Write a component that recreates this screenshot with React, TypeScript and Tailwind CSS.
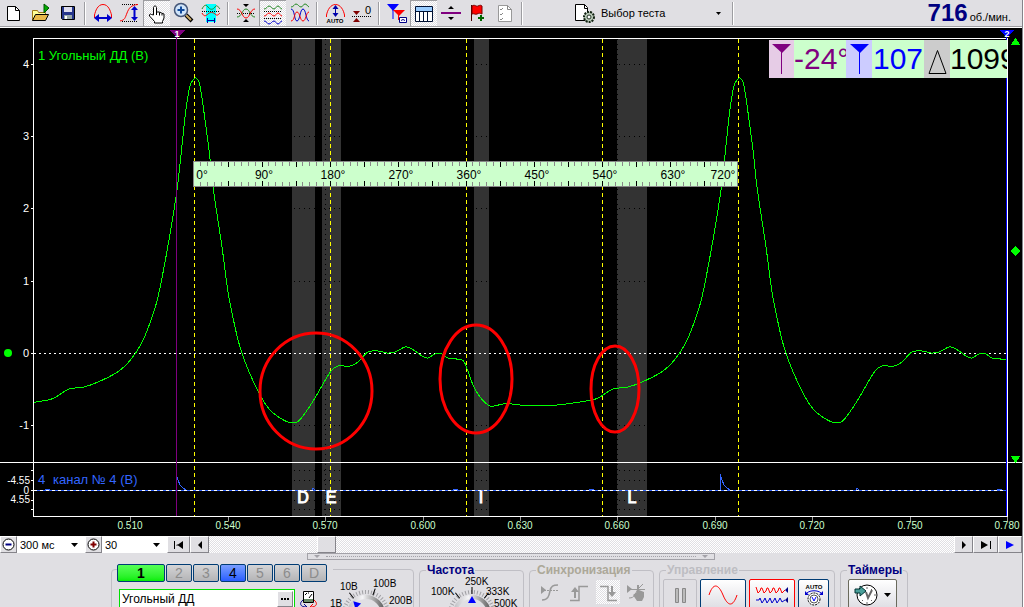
import React from "react";

type Point = [number, number];

// One engine cycle of the knock sensor trace, starting at the compression peak.
const PERIOD = 544;
const CYCLE: Point[] = [
  [196, 78], [199, 82], [202, 98], [209, 150], [213, 187], [222, 247],
  [228, 292], [235, 327], [240, 347], [247, 367], [260, 395], [270, 410],
  [280, 418], [288, 422], [297, 422], [303, 416], [315, 398], [327, 377],
  [332, 370], [338, 366], [350, 366], [358, 362], [368, 352], [378, 351],
  [387, 353], [395, 352], [405, 347], [412, 349], [422, 356], [428, 358],
  [435, 354], [442, 354], [448, 358], [462, 360], [466, 366], [473, 385],
  [480, 397], [490, 406], [503, 404], [512, 404], [520, 405], [535, 406],
  [557, 405], [573, 403], [592, 400], [600, 397], [613, 389], [628, 387],
  [642, 382], [660, 373], [670, 365], [679, 354], [685, 344], [691, 331],
  [701, 301], [709, 262], [715, 228], [721, 190], [725, 155], [728, 126],
  [731, 102], [734, 86], [737, 80],
];

const PULSE: Point[] = [
  [176, 490], [176, 474], [178, 480], [180, 485], [183, 488], [186, 490],
  [312, 490], [313, 488], [315, 490], [453, 490], [454, 489], [458, 490],
  [589, 490], [590, 489], [594, 490],
];

const repeat = (points: Point[]): Point[] =>
  [-PERIOD, 0, PERIOD].flatMap((dx) =>
    points.map(([x, y]): Point => [x + dx, y])
  );

const toLine = (points: Point[]) => points.map((p) => p.join(",")).join(" ");

// Catmull-Rom spline written as cubic segments
const toCurve = (p: Point[]) =>
  p.slice(1, -2).reduce((d, _, i) => {
    const [a, b, c, e] = [p[i], p[i + 1], p[i + 2], p[i + 3]];
    return `${d}C${b[0] + (c[0] - a[0]) / 6} ${b[1] + (c[1] - a[1]) / 6} ${
      c[0] - (e[0] - b[0]) / 6
    } ${c[1] - (e[1] - b[1]) / 6} ${c[0]} ${c[1]}`;
  }, `M${p[1][0]} ${p[1][1]}`);

const BANDS = [
  { x: 292, w: 23, label: "D", tx: 303 },
  { x: 322, w: 19, label: "E", tx: 331 },
  { x: 474, w: 15, label: "I", tx: 481 },
  { x: 617, w: 30, label: "L", tx: 632 },
];
const Y_AXIS: [string, number][] = [
  ["4", 64], ["3", 136], ["2", 208], ["1", 281], ["0", 353], ["-1", 425],
];
const X_AXIS: [string, number][] = [
  ["0.510", 130], ["0.540", 228], ["0.570", 325], ["0.600", 423],
  ["0.630", 520], ["0.660", 617], ["0.690", 715], ["0.720", 812],
  ["0.750", 910], ["0.780", 1007],
];
const RULER: [string, number][] = [
  ["0°", 202], ["90°", 264], ["180°", 333], ["270°", 401], ["360°", 469],
  ["450°", 537], ["540°", 605], ["630°", 673], ["720°", 723],
];

const Chart = () => (
  <svg
    viewBox="0 28 1022 508"
    className="block w-full h-auto bg-black"
    role="img"
    aria-label="Осциллограмма"
  >
    <defs>
      <clipPath id="plot">
        <rect x="34" y="39" width="973" height="477" />
      </clipPath>
    </defs>

    <g shapeRendering="crispEdges">
      {BANDS.map((b) => (
        <g key={b.label}>
          <rect x={b.x} y="39" width={b.w} height="477" fill="#333" />
          {[64, 136, 208, 281, 425, 470, 480, 500, 509].map((y) => (
            <path
              key={y}
              d={`M${b.x + 2} ${y + 0.5}h${b.w - 2}`}
              stroke="#000"
              strokeDasharray="1 4"
            />
          ))}
        </g>
      ))}
      <path d="M325.5 39V516M617.5 39V516" stroke="#000" strokeDasharray="1 4" />
      <path d="M34 353.5H1007" stroke="#fff" strokeDasharray="2 3" />
      <path
        d="M194.5 39V516M330.5 39V516M466.5 39V516M602.5 39V516M738.5 39V516"
        stroke="#ff0"
        strokeDasharray="4 3"
      />
      <g clipPath="url(#plot)" fill="none">
        <path d={toCurve(repeat(CYCLE))} stroke="#0f0" />
        <polyline points={toLine(repeat(PULSE))} stroke="#36f" />
        <path d="M34 490.5H1007" stroke="#36f" />
        <path d="M34 490.5H1007" stroke="#fff" strokeDasharray="3 3" />
      </g>
      <path d="M33.5 516.5V38.5H1007.5V516.5ZM0 462.5H1022" stroke="#fff" fill="none" />
      <path
        d="M31 64.5h3M31 136.5h3M31 208.5h3M31 281.5h3M31 353.5h3M31 425.5h3M31 470.5h3M31 480.5h3M31 490.5h3M31 500.5h3M31 509.5h3"
        stroke="#fff"
      />
      {X_AXIS.map(([t, x]) => (
        <path key={t} d={`M${x + 0.5} 517v4`} stroke="#999" />
      ))}

      <path d="M176.5 37V516" stroke="#800080" />
      <path d="M169 30h16l-8 8z" fill="#800080" />
      <path d="M1006.5 37V516" stroke="#00f" />
      <path d="M999 30h15l-7 8z" fill="#00f" />
      <path
        d="M1015.5 38l5 7h-10zM1015.5 463l5-7h-10zM1015.5 246l5 5-5 5-5-5z"
        fill="#0f0"
      />

      <rect x="193.5" y="161.5" width="544" height="25" fill="#cfc" stroke="#888" />
      {Array.from({ length: 79 }, (_, i) => i + 1).map((i) => {
        const x = Math.floor(194 + i * 6.8) + 0.5;
        return (
          <path
            key={i}
            d={i % 5 ? `M${x} 162v4M${x} 186v-4` : `M${x} 162v5M${x} 186v-5`}
            stroke={i % 5 ? "#888" : "#000"}
          />
        );
      })}
    </g>
    <circle cx="8" cy="353" r="4" fill="#0f0" />

    <g fontSize="12" textAnchor="middle">
      {RULER.map(([t, x]) => (
        <text key={t} x={x} y="179">{t}</text>
      ))}
    </g>
    <g fontSize="11" fill="#fff" textAnchor="end">
      {Y_AXIS.map(([t, y]) => (
        <text key={t} x="29" y={y + 4}>{t}</text>
      ))}
    </g>
    <g fontSize="10" fill="#fff" textAnchor="end">
      <text x="30" y="484">-4.55</text>
      <text x="29" y="494">0</text>
      <text x="30" y="503">4.55</text>
    </g>
    <g fontSize="10" fill="#cfc" textAnchor="middle">
      {X_AXIS.map(([t, x]) => (
        <text key={t} x={x} y="529">{t}</text>
      ))}
    </g>
    <g fontSize="9" fill="#fff" fontWeight="bold" textAnchor="middle">
      <text x="177" y="37">1</text>
      <text x="1007" y="37">2</text>
    </g>
    <g fontSize="16" fill="#fff" stroke="#fff" strokeWidth="1" textAnchor="middle">
      {BANDS.map((b) => (
        <text key={b.label} x={b.tx} y="503">{b.label}</text>
      ))}
    </g>
    <text x="38" y="60" fontSize="13" fill="#0f0">1 Угольный ДД (В)</text>
    <text x="38" y="484" fontSize="13" fill="#36f">
      4<tspan x="53">канал № 4 (В)</tspan>
    </text>

    <g fill="none" stroke="#f00" strokeWidth="3">
      <ellipse cx="316" cy="391" rx="56" ry="58" />
      <ellipse cx="476" cy="379" rx="36" ry="54" />
      <ellipse cx="615" cy="389" rx="24" ry="43" />
    </g>
  </svg>
);

const Readout = () => (
  <div className="absolute top-[12px] right-[15px] w-[238px] h-[38px] flex overflow-hidden bg-[#ccffcc] text-[30px] leading-[38px] whitespace-nowrap">
    <svg className="w-[25px] shrink-0 bg-[#e6cce6]" viewBox="0 0 25 38">
      <path d="M3 4h19l-9 9z" fill="#800080" />
      <path d="M12.5 10v24" stroke="#800080" />
    </svg>
    <span className="w-[52px] shrink-0 overflow-hidden text-[#800080]">-24°</span>
    <svg className="w-[26px] shrink-0 bg-[#ccccff]" viewBox="0 0 26 38">
      <path d="M4 4h19l-9 9z" fill="#00f" />
      <path d="M13.5 10v24" stroke="#00f" />
    </svg>
    <span className="w-[52px] shrink-0 pl-px overflow-hidden text-[#0000ff]">107</span>
    <svg className="w-[26px] shrink-0 bg-[#cccccc]" viewBox="0 0 26 38">
      <path d="M13.5 10.5l8.5 23h-17z" fill="none" stroke="#000" />
    </svg>
    <span className="overflow-hidden text-black">1099</span>
  </div>
);

const Icon = ({ children }: { children: React.ReactNode }) => (
  <svg width="24" height="24" viewBox="0 0 24 24" fill="none" aria-hidden="true">
    {children}
  </svg>
);

const Tool = ({
  label,
  pressed,
  children,
}: {
  label: string;
  pressed?: boolean;
  children: React.ReactNode;
}) => (
  <button
    title={label}
    aria-label={label}
    aria-pressed={pressed}
    className={
      pressed
        ? "w-[27px] h-[26px] shrink-0 flex items-center justify-center border-t border-l border-[#9d9da1] [background-image:repeating-conic-gradient(#fff_0_25%,#e0dfe3_0_50%)] bg-size-[2px_2px]"
        : "w-[27px] h-[26px] shrink-0 flex items-center justify-center"
    }
  >
    <Icon>{children}</Icon>
  </button>
);

const Divider = () => (
  <div className="w-2 shrink-0 flex justify-center">
    <div className="w-[2px] h-[23px] mt-[2px] border-l border-[#9d9da1] border-r border-r-white" />
  </div>
);

const Toolbar = () => (
  <div className="flex h-7 bg-[#e0dfe3] border-b border-white shadow-[inset_0_-1px_#9d9da1]">
    <Tool label="Новый">
      <path d="M5.5 5.5h8l4 4v10h-12z" fill="#fff" stroke="#000" />
      <path d="M13.5 5.5v4h4" stroke="#000" />
    </Tool>
    <Tool label="Открыть">
      <path d="M3.5 19.5v-10h5l1 2h7v3" fill="#ff9" stroke="#a07818" />
      <path d="M3.5 19.5l3-6h13l-3 6z" fill="#e8b84a" stroke="#000" />
      <path d="M15 3l5 4-5 5z" fill="#0a0" stroke="#050" />
    </Tool>
    <Tool label="Сохранить">
      <path d="M5.5 5.5h13v13h-12l-1-1z" fill="#26368c" stroke="#000" />
      <path d="M8 6h8v5H8z" fill="#dde" />
      <path d="M8 14h8v4H8z" fill="#9aa" />
      <path d="M9 15h2v3H9z" fill="#fff" />
    </Tool>
    <Divider />
    <Tool label="Период">
      <path d="M3.5 17v-3c1-4 3-10.500 8.500-10.500S19.500 10 20.500 14v3" stroke="#f00" />
      <path d="M3 17l5-4v8zM21 17l-5-4v8z" fill="#00c" />
      <path d="M6 17h12" stroke="#00c" strokeWidth="2" />
    </Tool>
    <Tool label="Амплитуда">
      <path d="M4 3.5h16M4 20.5h16" stroke="#000" strokeDasharray="1 1" />
      <path d="M2 20c5-1 5-3 7-8s4-8 11-8.500" stroke="#f00" />
      <path d="M16.500 5l-3.500 4h7zM16.500 20l-3.500-4h7z" fill="#00c" />
      <path d="M16.500 7v10" stroke="#00c" strokeWidth="2" />
    </Tool>
    <Tool label="Рука" pressed>
      <path
        d="M8.500 13V5.500c0-2 3-2 3 0V10l2.500 0 2.500 1 2.500 1v4l-1.500 3.500V21h-8v-1.500L4.500 14c-.5-2 1-2.500 2-1.500z"
        fill="#fff"
        stroke="#000"
      />
      <path d="M11.500 10v3M14.500 10.500v3M17 11.500v2" stroke="#000" />
    </Tool>
    <Tool label="Увеличить">
      <path d="M14 14l6 6" stroke="#000" strokeWidth="4" />
      <path d="M14 14l5 5" stroke="#ca6" strokeWidth="2" />
      <circle cx="9" cy="9" r="6.500" fill="#cfe4fa" stroke="#457" strokeWidth="1.500" />
      <path d="M5.500 9h7M9 5.500v7" stroke="#114a9c" strokeWidth="2" />
    </Tool>
    <Tool label="Фаза">
      <path d="M7 3h10v18H7z" fill="#0ff" />
      <path d="M3 8c2-4 4-5 6-2s5 3 7 0 3 0 5 2" stroke="#282" />
      <path d="M3 10.500h18" stroke="#000" strokeDasharray="1 1" />
      <path d="M3 12c2 4 4 3 6 1s5-2 7 0 3 1 5-1" stroke="#f00" />
      <path d="M8 19.500h8M8.500 17v5M15.500 17v5" stroke="#00a" />
    </Tool>
    <Divider />
    <Tool label="Сжать">
      <path d="M9 3h6l-3 3zM9 21h6l-3-3z" fill="#000" />
      <path d="M3 12.500h18" stroke="#000" strokeDasharray="1 1" />
      <path d="M3 16c5 0 5-8 9-8s4 8 9 8" stroke="#282" />
      <path d="M3 8c5 0 5 9 9 9s4-9 9-9" stroke="#f00" />
    </Tool>
    <Tool label="Раздельно" pressed>
      <path d="M3 7c3 0 3-3 5-3s3 3 5 3 2-3 4-3 2 3 4 3" stroke="#282" />
      <path d="M3 9.500h18M3 16.500h18" stroke="#000" strokeDasharray="1 1" />
      <path d="M3 14c3 0 3-3 5-3s3 3 5 3 2-3 4-3 2 3 4 3" stroke="#f00" />
      <path d="M3 19c3 0 3 3 5 3s3-3 5-3 2 3 4 3 2-3 4-3" stroke="#00c" />
    </Tool>
    <Tool label="Совместно">
      <path d="M3 6c3 0 3-3 5-3s3 3 5 3 2-3 4-3 2 2 4 3" stroke="#282" />
      <path d="M3 8c4 0 3 12 6 12s3-12 6-12 3 12 6 12" stroke="#00c" />
      <path d="M3 20c4 0 3-9 6-9s3 9 6 9 3-9 6-9" stroke="#f00" />
    </Tool>
    <Divider />
    <Tool label="Авто масштаб">
      <path d="M3.500 16v-2c1-5 4-10.500 9-10.500S20.500 9 21.500 14v2" stroke="#f00" />
      <path d="M12.500 4l-3 4h6zM12.500 16l-3-4h6z" fill="#00a" />
      <path d="M12.500 6v8" stroke="#00a" />
      <text x="12" y="22" fontSize="6" fontWeight="bold" fill="#000" textAnchor="middle">AUTO</text>
    </Tool>
    <Tool label="Ноль">
      <path d="M3 10h7l-3.500 4zM3 21h7l-3.500-4z" fill="#800000" />
      <path d="M2 15.500h20" stroke="#000" strokeDasharray="1 1" />
      <text x="15" y="13" fontSize="11" fill="#000">0</text>
    </Tool>
    <Divider />
    <Tool label="Маркеры">
      <path d="M2 3h12l-6 7z" fill="#00f" />
      <path d="M8 8v10" stroke="#00f" />
      <path d="M8 9h12l-6 6z" fill="#f00" />
      <path d="M13.500 12v7" stroke="#f00" />
      <path d="M14.500 16.500h7v5h-7z" fill="#fff" stroke="#008" />
      <path d="M16 19.500l2-1 2 1" stroke="#008" />
    </Tool>
    <Tool label="Таблица" pressed>
      <path d="M3.500 4.500h17v15h-17z" fill="#fff" stroke="#013" />
      <path d="M4 5h16v4H4z" fill="#9cf" />
      <path d="M3 9.500h18M7.500 9v10M11.500 9v10M15.500 9v10" stroke="#013" />
    </Tool>
    <Tool label="Линия">
      <path d="M9 8h6l-3-3zM9 16h6l-3 3z" fill="#000" />
      <path d="M2 12h20" stroke="#800080" strokeWidth="2" />
    </Tool>
    <Tool label="Добавить метку">
      <path d="M5.500 4v16" stroke="#400" />
      <path d="M6 5c3-2 4 1 6 0s3-1 4 0v8c-2-1-3-1-5 0s-3-1-5 0z" fill="#f00" stroke="#700" />
      <path d="M15 14v6M12 17h6" stroke="#060" strokeWidth="2" />
    </Tool>
    <Tool label="Список">
      <path d="M5.500 4.500h9l4 4v12h-13z" fill="#fff" stroke="#999" />
      <path d="M14.500 4.500v4h4M7 8l1 1 2-2M7 13l1 1 2-2M7 18l1 1 2-2" stroke="#888" />
    </Tool>
    <Divider />
    <button className="flex items-center w-[203px] h-[26px] shrink-0 pl-[47px] text-[11px]">
      <Icon>
        <path d="M2.500 3.500h9l3 3v13h-12z" fill="#fff" stroke="#000" />
        <path d="M11.500 3.500v4h3" stroke="#000" />
        <circle cx="16" cy="16" r="5" fill="#bcb" stroke="#121" strokeDasharray="2 1" strokeWidth="2" />
        <circle cx="16" cy="16" r="2" fill="#fff" stroke="#232" />
      </Icon>
      <span className="pl-1">Выбор теста</span>
      <svg className="ml-auto mr-2" width="5" height="3" viewBox="0 0 5 3" aria-hidden="true">
        <path d="M0 0h5L2.500 3z" />
      </svg>
    </button>
    <Divider />
    <div className="ml-auto mr-[11px] flex items-baseline gap-[2px] leading-[26px] whitespace-nowrap">
      <strong className="text-2xl leading-[26px] text-[#000080]">716</strong>
      <span className="text-[11px]">об./мин.</span>
    </div>
  </div>
);

const bevel =
  "shrink-0 h-[17px] flex items-center justify-center bg-[#e0dfe3] border border-t-white border-l-white border-r-[#85848a] border-b-[#85848a]";

const Combo = ({
  label,
  value,
  className,
}: {
  label: string;
  value: string;
  className: string;
}) => (
  <div className={`grid h-[17px] shrink-0 bg-white ${className}`}>
    <select
      aria-label={label}
      defaultValue={value}
      className="col-start-1 row-start-1 appearance-none pl-[3px] text-[11px] leading-4"
    >
      <option>{value}</option>
    </select>
    <svg
      className="col-start-1 row-start-1 self-center justify-self-end mr-[7px] pointer-events-none"
      width="7"
      height="4"
      viewBox="0 0 7 4"
      aria-hidden="true"
    >
      <path d="M0 0h7L3.500 4z" />
    </svg>
  </div>
);

const ZoomButton = ({ plus }: { plus?: boolean }) => (
  <button aria-label={plus ? "Крупнее" : "Мельче"} className={`${bevel} w-[17px]`}>
    <svg width="13" height="13" viewBox="0 0 13 13" aria-hidden="true">
      <circle cx="6.500" cy="6.500" r="5.500" fill="#fff" stroke="#000" />
      <path
        d={plus ? "M3.500 6.500h6M6.500 3.500v6" : "M3.500 6.500h6"}
        stroke={plus ? "#800000" : "#000080"}
        strokeWidth="2"
      />
    </svg>
  </button>
);

const Timeline = () => (
  <div className="flex h-[17px] bg-white">
    <ZoomButton />
    <Combo label="Развёртка" value="300 мс" className="w-[68px]" />
    <ZoomButton plus />
    <Combo label="Масштаб" value="30" className="w-[65px]" />
    <button aria-label="В начало" className={`${bevel} w-[23px]`}>
      <svg width="10" height="8" viewBox="0 0 10 8" aria-hidden="true">
        <path d="M0 0h1v8H0zM3 3.500h1L9 0v8L4 4.500H2z" />
      </svg>
    </button>
    <button aria-label="Назад" className={`${bevel} w-[19px]`}>
      <svg width="4" height="8" viewBox="0 0 4 8" aria-hidden="true">
        <path d="M4 0v8L0 4z" />
      </svg>
    </button>
    <input
      type="range"
      aria-label="Позиция"
      max={1000}
      defaultValue={149}
      className="flex-1 min-w-0 h-[17px] appearance-none [background-image:repeating-conic-gradient(#fff_0_25%,#e0dfe3_0_50%)] bg-size-[2px_2px] [&::-webkit-slider-thumb]:appearance-none [&::-webkit-slider-thumb]:w-[19px] [&::-webkit-slider-thumb]:h-[17px] [&::-webkit-slider-thumb]:bg-[#e0dfe3] [&::-webkit-slider-thumb]:border [&::-webkit-slider-thumb]:border-t-white [&::-webkit-slider-thumb]:border-l-white [&::-webkit-slider-thumb]:border-r-[#85848a] [&::-webkit-slider-thumb]:border-b-[#85848a]"
    />
    <button aria-label="Вперёд" className={`${bevel} w-[19px]`}>
      <svg width="4" height="8" viewBox="0 0 4 8" aria-hidden="true">
        <path d="M0 0v8l4-4z" />
      </svg>
    </button>
    <button aria-label="В конец" className={`${bevel} w-[25px]`}>
      <svg width="10" height="8" viewBox="0 0 10 8" aria-hidden="true">
        <path d="M9 0h1v8H9zM0 0l7 4-7 4z" />
      </svg>
    </button>
    <button aria-label="Пуск" className={`${bevel} w-[24px]`}>
      <svg width="8" height="8" viewBox="0 0 8 8" aria-hidden="true">
        <path d="M0 0l8 4-8 4z" fill="#00f" />
      </svg>
    </button>
  </div>
);

const Splitter = () => (
  <div className="mx-auto flex w-[408px] h-[7px] items-center gap-1.5 px-1.5 border border-[#a3a2a8]">
    <svg width="6" height="3" viewBox="0 0 6 3" aria-hidden="true">
      <path d="M0 0h6L3 3z" fill="#a3a2a8" />
    </svg>
    <div className="flex-1 border-t border-dotted border-[#a3a2a8]" />
    <svg width="6" height="3" viewBox="0 0 6 3" aria-hidden="true">
      <path d="M0 0h6L3 3z" fill="#a3a2a8" />
    </svg>
  </div>
);

type Mark = { text: string; x: number; y: number };

const Dial = ({
  name,
  width,
  cx,
  marks,
  pointer,
  ticks,
}: {
  name: string;
  width: number;
  cx: number;
  marks: Mark[];
  pointer: number;
  ticks: number[];
}) => (
  <svg
    width={width}
    height="64"
    viewBox={`0 0 ${width} 64`}
    className="block shrink-0"
    role="img"
    aria-label={name}
  >
    <defs>
      <linearGradient id={`face${width}`} x1="0" y1="0" x2="1" y2="0">
        <stop offset="0" stopColor="#c4c4c8" />
        <stop offset="0.4" stopColor="#f4f4f6" />
        <stop offset="1" stopColor="#666" />
      </linearGradient>
    </defs>
    <circle cx={cx} cy="38" r="17" fill="#e0dfe3" stroke={`url(#face${width})`} strokeWidth="4" />
    <circle cx={cx} cy="38" r="22" fill="none" stroke="#a0a0a4" strokeWidth="4" strokeDasharray="1 2" />
    {ticks.map((a) => (
      <path key={a} d={`M${cx} 18v-7`} stroke="#000" transform={`rotate(${a} ${cx} 38)`} />
    ))}
    <path d={`M${cx} 20l4 7h-8z`} fill="#00f" transform={`rotate(${pointer} ${cx} 38)`} />
    <g fontSize="10" fill="#000">
      {marks.map((m) => (
        <text key={m.text} x={m.x} y={m.y}>{m.text}</text>
      ))}
    </g>
  </svg>
);

const Channels = () => (
  <div className="flex mt-[9px] w-[303px] h-20 shrink-0 border border-[#c0bfc5] rounded">
    <div className="w-[216px] shrink-0 pl-[5px]">
      <div className="-mt-1.5 flex w-max gap-px pr-1.5 bg-[#e0dfe3] text-sm leading-4">
        <button className="w-12 h-[18px] border border-[#003c74] rounded-[2px] bg-linear-to-b from-[#5f5] to-[#0e0] font-bold">
          1
        </button>
        {["2", "3", "4", "5", "6", "D"].map((c) => (
          <button
            key={c}
            className={
              c === "4"
                ? "w-[26px] h-[18px] border border-[#003c74] rounded-[2px] bg-linear-to-b from-[#7a9dff] to-[#2a5cff]"
                : "w-[26px] h-[18px] border border-[#003c74] rounded-[2px] bg-linear-to-b from-[#d4d4d6] to-[#b4b4b6] text-[#8c8c8c]"
            }
          >
            {c}
          </button>
        ))}
      </div>
      <div className="flex mt-[7px] ml-[2px]">
        <div className="flex w-[176px] h-5 bg-white border border-[#00e000]">
          <input
            aria-label="Имя канала"
            defaultValue="Угольный ДД"
            className="flex-1 min-w-0 pl-[2px] text-xs outline-none"
          />
          <button
            aria-label="Выбрать"
            className="w-4 h-4 mt-px mr-px bg-[#e0dfe3] border border-t-white border-l-white border-r-[#85848a] border-b-[#85848a] flex items-center justify-center gap-px"
          >
            <span className="size-[2px] bg-black" />
            <span className="size-[2px] bg-black" />
            <span className="size-[2px] bg-black" />
          </button>
        </div>
        <svg className="ml-[5px] mt-px" width="18" height="20" viewBox="0 0 18 20" fill="none" aria-hidden="true">
          <path d="M3.500 1.500h10v11h-10z" fill="#fff" stroke="#000" />
          <path d="M4 9h9v3H4z" fill="#686" />
          <path d="M5 5l2-2M8 3h1M12 4l-3 4" stroke="#000" />
          <path d="M3 10c-4 3-3 7 3 7M4 14l3 3-3 3" stroke="#008" />
          <path d="M14 10c4 3 3 7-3 7M13 14l-3 3 3 3" stroke="#f00" />
        </svg>
      </div>
    </div>
    <div className="mt-1.5">
      <Dial
        name="Чувствительность"
        width={85}
        cx={38}
        pointer={-45}
        ticks={[-38, 20]}
        marks={[
          { text: "1В", x: 2, y: 31 },
          { text: "10В", x: 12, y: 14 },
          { text: "100В", x: 45, y: 11 },
          { text: "200В", x: 61, y: 28 },
        ]}
      />
    </div>
  </div>
);

const Group = ({
  title,
  className,
  tone = "text-[#000080]",
  children,
}: {
  title: string;
  className: string;
  tone?: string;
  children: React.ReactNode;
}) => (
  <fieldset className={`mt-1 h-[85px] shrink-0 min-w-0 border border-[#c0bfc5] rounded ${className}`}>
    <legend className={`ml-1.5 px-px text-xs leading-3 font-bold ${tone}`}>{title}</legend>
    {children}
  </fieldset>
);

const control =
  "shrink-0 h-8 flex items-center justify-center border rounded-[2px] bg-linear-to-b from-white to-[#dcdce2]";
const trigger = "size-6 shrink-0 flex items-center justify-center";

const Panel = () => (
  <div className="flex-1 min-h-0 overflow-hidden flex items-start gap-[5px] pl-[111px]">
    <Channels />
    <Group title="Частота" className="w-[105px]">
      <Dial
        name="Частота"
        width={103}
        cx={52}
        pointer={0}
        ticks={[-38, 0, 38]}
        marks={[
          { text: "100K", x: 11, y: 19 },
          { text: "250K", x: 45, y: 9 },
          { text: "333K", x: 66, y: 19 },
          { text: "500K", x: 74, y: 31 },
        ]}
      />
    </Group>
    <Group title="Синхронизация" className="w-[125px]" tone="text-[#aca899]">
      <div className="flex gap-[5px] pt-1 pl-2">
        <button aria-label="Уровень" className={trigger}>
          <Icon>
            <path d="M3 6l5 4-5 4z" fill="#999" />
            <path d="M3 10.500h18" stroke="#999" strokeDasharray="2 1" />
            <path d="M4 20c6 0 7-4 8-9s3-6 8-6" stroke="#999" strokeWidth="1.500" />
          </Icon>
        </button>
        <button aria-label="Фронт" className={trigger}>
          <Icon>
            <path d="M3 20.500h9v-14h9" stroke="#999" strokeWidth="1.500" />
            <path d="M8 7l-4 5h8z" fill="#999" />
            <path d="M8 9v9" stroke="#999" strokeWidth="2" />
          </Icon>
        </button>
        <button
          aria-label="Спад"
          aria-pressed
          className={`${trigger} [background-image:repeating-conic-gradient(#fff_0_25%,#e0dfe3_0_50%)] bg-size-[2px_2px]`}
        >
          <Icon>
            <path d="M4 6.500h8v14h9" stroke="#999" strokeWidth="1.500" />
            <path d="M16 17l-4-5h8z" fill="#999" />
            <path d="M16 6v9" stroke="#999" strokeWidth="2" />
          </Icon>
        </button>
        <button aria-label="Ручная" className={trigger}>
          <Icon>
            <path d="M2 5l5 4-5 4z" fill="#999" />
            <path d="M2 9.500h18M4 18c6 0 6-4 9-9l5-5" stroke="#999" />
            <path d="M12 12V5h2v5l5 2v5l-2 4h-5l-4-6z" fill="#999" />
          </Icon>
        </button>
      </div>
    </Group>
    <Group title="Управление" className="w-[176px]" tone="text-[#bdbdc2]">
      <div className="flex gap-[3px] pt-[3px] pl-[3px]">
        <button
          aria-label="Пауза"
          className="shrink-0 w-[34px] h-8 flex items-center justify-center border border-[#c0bfc5] rounded-[2px]"
        >
          <svg width="11" height="15" viewBox="0 0 11 15" fill="#bbb" stroke="#888" aria-hidden="true">
            <path d="M.5.5h3v14h-3zM7.500.5h3v14h-3z" />
          </svg>
        </button>
        <button aria-label="Один канал" className={`${control} w-[46px] border-[#003c74]`}>
          <svg width="30" height="20" viewBox="0 0 30 20" fill="none" aria-hidden="true">
            <path d="M1 10C5-2 10-2 15 10s10 12 14 0" stroke="#f00" />
          </svg>
        </button>
        <button aria-label="Непрерывно" className={`${control} w-[46px] border-[#f00]`}>
          <svg width="34" height="20" viewBox="0 0 34 20" fill="none" aria-hidden="true">
            <path d="M1 2l2 6 2-2 1-3 1 0 2 5 2-2 1-3 1 0 2 5 2-2 1-3 1 0 2 5 2-2 1-3 1 0 2 5 3-3" stroke="#f00" />
            <path d="M1 15h3l1-2 2 5 2-3 1-2 2 5 2-3 1-2 2 5 2-3 1-2 2 5 2-3 1-2 2 4 3-2" stroke="#00c" />
            <path d="M30 5l3-3v6zM30 15l3-3v6z" fill="#008" />
          </svg>
        </button>
        <button aria-label="Автонастройка" className={`${control} w-[31px] border-[#003c74]`}>
          <svg width="24" height="24" viewBox="0 0 24 24" fill="none" aria-hidden="true">
            <text x="12" y="6" fontSize="6" fontWeight="bold" fill="#000" textAnchor="middle">AUTO</text>
            <path d="M5 10c3-3 11-3 14 0" stroke="#00c" />
            <path d="M3 8v4h4zM21 8v4h-4z" fill="#00c" />
            <circle cx="12" cy="16" r="6" fill="#fff" stroke="#000" strokeDasharray="2 1" />
            <circle cx="12" cy="16" r="4" stroke="#555" />
            <path d="M10 14l2 4 2-4" stroke="#00f" />
          </svg>
        </button>
      </div>
    </Group>
    <Group title="Таймеры" className="w-[68px]">
      <div className="pt-[3px] pl-[7px]">
        <button aria-label="Таймеры" className={`${control} w-[49px] gap-1.5 border-[#6a6a5c]`}>
          <svg width="24" height="24" viewBox="0 0 24 24" fill="none" aria-hidden="true">
            <circle cx="13" cy="12" r="10" fill="#fff" stroke="#000" />
            <path d="M13 4v2M13 19v2M20 12h2M18 6l-1 1M18 18l-1-1M8 18l1-1" stroke="#666" />
            <path d="M12 9l2 6 4-8" stroke="#666" strokeWidth="2" />
            <path d="M1 6h5V3l6 5-6 5v-3H1z" fill="#4aa09a" stroke="#033" />
          </svg>
          <svg width="7" height="4" viewBox="0 0 7 4" aria-hidden="true">
            <path d="M0 0h7L3.500 4z" />
          </svg>
        </button>
      </div>
    </Group>
  </div>
);

export default function App() {
  return (
    <div className="h-screen overflow-hidden border-r border-white bg-[#e0dfe3] font-['Liberation_Sans',Arial,sans-serif] text-black">
      <div className="flex flex-col h-full border-r border-[#85848a]">
        <Toolbar />
        <div className="relative">
          <Chart />
          <Readout />
        </div>
        <Timeline />
        <Splitter />
        <Panel />
      </div>
    </div>
  );
}
